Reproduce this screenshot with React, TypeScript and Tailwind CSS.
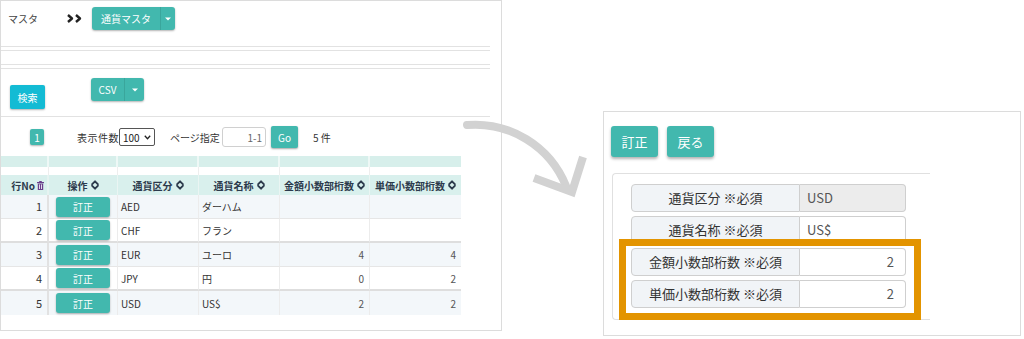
import React from 'react';

function SortIcon() {
  return (
    <svg width="8" height="10" viewBox="0 0 8 10" className="inline-block ml-[3px] shrink-0">
      <path d="M1.2 4.2 L4 1.3 L6.8 4.2" fill="none" stroke="#2c3a4c" strokeWidth="1.9" strokeLinecap="round" strokeLinejoin="round" />
      <path d="M1.2 5.8 L4 8.7 L6.8 5.8" fill="none" stroke="#2c3a4c" strokeWidth="1.9" strokeLinecap="round" strokeLinejoin="round" />
    </svg>
  );
}

function TrashIcon() {
  return (
    <svg width="7" height="9" viewBox="0 0 7 9" className="inline-block ml-[2px] shrink-0">
      <rect x="0" y="1" width="7" height="1.2" fill="#6b3f8c" />
      <rect x="2.2" y="0" width="2.6" height="1" fill="#6b3f8c" />
      <path d="M0.8 2.6 H6.2 V9 H0.8 Z" fill="#6b3f8c" />
      <rect x="2" y="3.4" width="0.8" height="4.6" fill="#fff" />
      <rect x="4.2" y="3.4" width="0.8" height="4.6" fill="#fff" />
    </svg>
  );
}

function Chevrons() {
  return (
    <svg width="16" height="9" viewBox="0 0 16 9" className="shrink-0">
      <path d="M1 1 L5 4.5 L1 8" fill="none" stroke="#222" strokeWidth="2.4" strokeLinejoin="round" />
      <path d="M9 1 L13 4.5 L9 8" fill="none" stroke="#222" strokeWidth="2.4" strokeLinejoin="round" />
    </svg>
  );
}

function Caret() {
  return (
    <svg width="6" height="4" viewBox="0 0 6 4">
      <path d="M0 0.5 H6 L3 3.5 Z" fill="#fff" />
    </svg>
  );
}

const rows = [
  { no: 1, code: 'AED', name: 'ダーハム', a: '', b: '' },
  { no: 2, code: 'CHF', name: 'フラン', a: '', b: '' },
  { no: 3, code: 'EUR', name: 'ユーロ', a: '4', b: '4' },
  { no: 4, code: 'JPY', name: '円', a: '0', b: '2' },
  { no: 5, code: 'USD', name: 'US$', a: '2', b: '2' },
];

const headers = ['操作', '通貨区分', '通貨名称', '金額小数部桁数', '単価小数部桁数'];

function LeftPanel() {
  return (
    <div className="w-[502px] h-[331px] border border-[#dcdcdc] shrink-0 flex flex-col text-[10px] text-[#333] bg-white">
      {/* breadcrumb */}
      <div className="flex items-center h-[23px] mt-[6px] pl-[7px]">
        <span className="w-[59px] text-[10px] text-[#444]">マスタ</span>
        <Chevrons />
        <div className="ml-[9px] flex h-[23px] rounded-[3px] bg-[#42b8ae] shadow-[0_1px_2px_rgba(0,0,0,0.3)] text-white">
          <div className="w-[68px] flex items-center justify-center text-[10px]">通貨マスタ</div>
          <div className="w-[15px] flex items-center justify-center border-l border-[#3aa69c]"><Caret /></div>
        </div>
      </div>
      <div className="mt-[16px] mr-[11px] h-[5px] border-t border-b border-[#e2e2e2]" />
      <div className="mt-[13px] mr-[11px] h-[5px] border-t border-b border-[#e2e2e2]" />
      {/* buttons */}
      <div className="flex items-start h-[47px] pl-[9px]">
        <div className="mt-[16px] w-[35px] h-[24px] rounded-[2px] bg-[#13bbd4] text-white flex items-center justify-center shadow-[0_1px_2px_rgba(0,0,0,0.3)]">検索</div>
        <div className="ml-[46px] mt-[9px] flex h-[23px] rounded-[3px] bg-[#42b8ae] shadow-[0_1px_2px_rgba(0,0,0,0.3)] text-white">
          <div className="w-[33px] flex items-center justify-center">CSV</div>
          <div className="w-[20px] flex items-center justify-center border-l border-[#3aa69c]"><Caret /></div>
        </div>
      </div>
      <div className="mr-[11px] border-t border-[#e2e2e2]" />
      {/* pagination */}
      <div className="flex items-center h-[22px] mt-[9px]">
        <div className="ml-[29px] w-[14px] h-[16px] rounded-[2px] bg-[#42b8ae] text-white flex items-center justify-center shadow-[0_1px_2px_rgba(0,0,0,0.3)]">1</div>
        <span className="ml-[33px] w-[42px] tracking-[0.5px]">表示件数</span>
        <div className="w-[36px] h-[18px] border border-[#555] rounded-[2px] flex items-center justify-between px-[3px] text-[10px] text-[#222]">
          <span>100</span>
          <svg width="7" height="5" viewBox="0 0 7 5"><path d="M0.8 0.8 L3.5 3.8 L6.2 0.8" fill="none" stroke="#222" strokeWidth="1.3" /></svg>
        </div>
        <span className="ml-[15px] w-[52px]">ページ指定</span>
        <div className="w-[44px] h-[20px] border border-[#d0d0d0] rounded-[3px] flex items-center justify-end pr-[3px] text-[#666]">1-1</div>
        <div className="ml-[5px] w-[27px] h-[22px] rounded-[2px] bg-[#42b8ae] text-white flex items-center justify-center shadow-[0_1px_2px_rgba(0,0,0,0.35)]">Go</div>
        <span className="ml-[15px]">5 件</span>
      </div>
      {/* table */}
      <div className="mt-[8px] w-[461px] grid grid-cols-[48px_69px_81px_81px_90px_91px]">
        {[0, 1, 2, 3, 4, 5].map((i) => (
          <div key={'b' + i} className={`h-[11px] bg-[#d7efeb] ${i < 5 ? 'border-r-2 border-[#eef8f6]' : ''}`} />
        ))}
        {[0, 1, 2, 3, 4, 5].map((i) => (
          <div key={'g' + i} className={`h-[8px] ${i < 5 ? 'border-r border-[#eeeeee]' : ''}`} />
        ))}
        <div className="h-[20px] bg-[#d9f0ed] border-r-2 border-[#e6f3f1] flex items-center justify-end pr-[3px] font-bold text-[#2c3a4c]">
          行No<TrashIcon />
        </div>
        {headers.map((h, i) => (
          <div key={h} className={`h-[20px] bg-[#d9f0ed] ${i < 4 ? 'border-r border-[#eaf5f3]' : ''} flex items-center justify-center font-bold text-[#2c3a4c]`}>
            {h}
            <SortIcon />
          </div>
        ))}
        {rows.map((r, idx) => {
          const bg = idx % 2 === 0 ? 'bg-[#f3f7fa]' : 'bg-white';
          const bb = idx === 1 || idx === 3 ? 'border-b-2 border-b-[#dedede]' : idx === 4 ? '' : 'border-b border-b-[#e6e6e6]';
          const h = 'h-[24px]';
          return (
            <React.Fragment key={r.no}>
              <div className={`${h} ${bg} ${bb} border-r-2 border-r-[#e2e2e2] flex items-center justify-end pr-[5px] text-[11px] text-[#333]`}>{r.no}</div>
              <div className={`${h} ${bg} ${bb} border-r border-r-[#ececec] flex items-center justify-center`}>
                <div className="w-[54px] h-[20px] rounded-[3px] bg-[#42b8ae] text-white flex items-center justify-center shadow-[0_1px_2px_rgba(0,0,0,0.3)]">訂正</div>
              </div>
              <div className={`${h} ${bg} ${bb} border-r border-r-[#ececec] flex items-center pl-[3px] text-[#333]`}>{r.code}</div>
              <div className={`${h} ${bg} ${bb} border-r border-r-[#ececec] flex items-center pl-[3px] text-[#333]`}>{r.name}</div>
              <div className={`${h} ${bg} ${bb} border-r border-r-[#ececec] flex items-center justify-end pr-[5px] text-[#555]`}>{r.a}</div>
              <div className={`${h} ${bg} ${bb} flex items-center justify-end pr-[5px] text-[#555]`}>{r.b}</div>
            </React.Fragment>
          );
        })}
      </div>
    </div>
  );
}

function FormRow({ label, value, disabled, right }: { label: string; value: string; disabled?: boolean; right?: boolean }) {
  return (
    <div className="flex h-[28px]">
      <div className="w-[169px] h-full border border-[#cfcfcf] rounded-l-[4px] bg-[#f1f4f7] flex items-center justify-center text-[13px] text-[#333]">
        {label}
      </div>
      <div
        className={`w-[106px] h-full border border-l-0 border-[#cfcfcf] rounded-r-[4px] flex items-center text-[13px] text-[#555] ${
          disabled ? 'bg-[#ececec]' : 'bg-white'
        } ${right ? 'justify-end pr-[11px]' : 'pl-[7px]'}`}
      >
        {value}
      </div>
    </div>
  );
}

function RightPanel() {
  return (
    <div className="ml-[101px] mt-[111px] w-[418px] h-[225px] border border-[#dcdcdc] shrink-0 bg-white flex flex-col">
      <div className="flex gap-[9px] pl-[7px] pt-[14px]">
        <div className="w-[47px] h-[31px] rounded-[3px] bg-[#42b8ae] text-white text-[13px] flex items-center justify-center shadow-[0_2px_3px_rgba(0,0,0,0.3)]">訂正</div>
        <div className="w-[47px] h-[31px] rounded-[3px] bg-[#42b8ae] text-white text-[13px] flex items-center justify-center shadow-[0_2px_3px_rgba(0,0,0,0.3)]">戻る</div>
      </div>
      <div className="relative ml-[8px] mt-[16px] w-[318px] h-[147px] border border-r-0 border-[#e0e0e0] rounded-l-[4px] pt-[10px] pl-[18px] flex flex-col gap-[4px]">
        <FormRow label="通貨区分 ※必須" value="USD" disabled />
        <FormRow label="通貨名称 ※必須" value="US$" />
        <FormRow label="金額小数部桁数 ※必須" value="2" right />
        <FormRow label="単価小数部桁数 ※必須" value="2" right />
        <div className="absolute left-[6px] top-[65px] w-[302px] h-[81px] border-[7px] border-[#e39400]" />
      </div>
    </div>
  );
}

export default function App() {
  return (
    <div className="relative w-[1024px] h-[339px] bg-white overflow-hidden font-['Noto_Sans_CJK_JP','Noto_Sans',sans-serif]">
      <div className="flex items-start">
        <LeftPanel />
        <RightPanel />
      </div>
      <svg className="absolute left-0 top-0 pointer-events-none" width="1024" height="339" viewBox="0 0 1024 339">
        <path d="M467 125 A 98 98 0 0 1 566 186" fill="none" stroke="#d2d2d2" strokeWidth="8" strokeLinecap="round" />
        <path d="M534 178 L572 192 L583 157" fill="none" stroke="#d2d2d2" strokeWidth="8" strokeLinejoin="miter" />
      </svg>
    </div>
  );
}
